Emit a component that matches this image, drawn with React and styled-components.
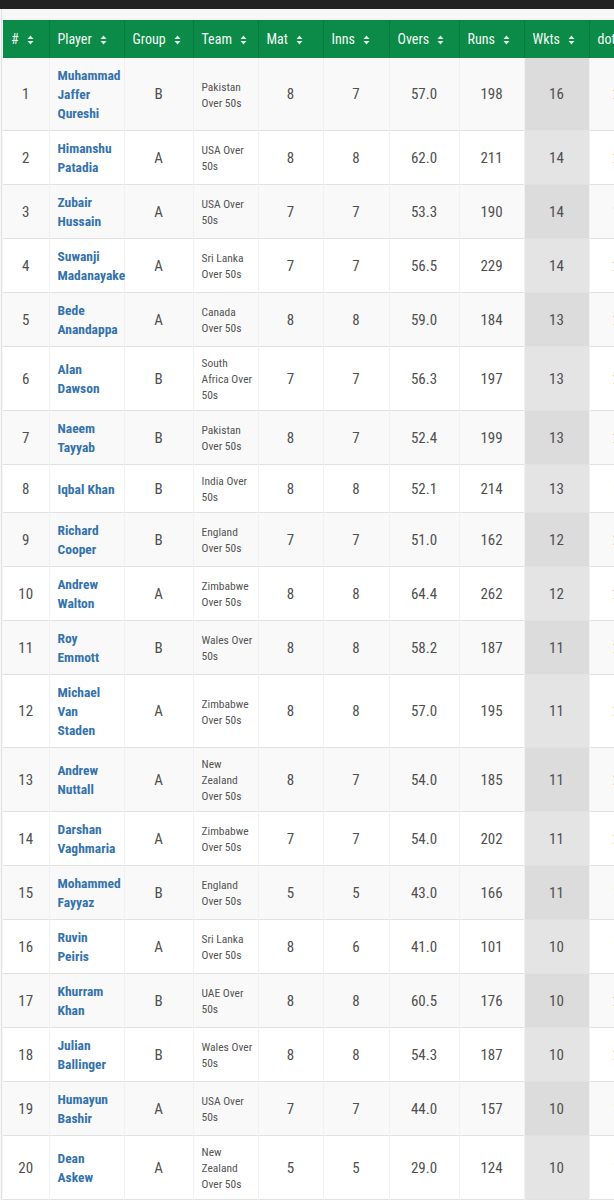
import React from "react";
import styled, { createGlobalStyle } from "styled-components";

const GlobalStyle = createGlobalStyle`
  html, body {
    margin: 0;
    padding: 0;
    background: #f7f7f7;
    font-family: "Roboto Condensed", Roboto, "Liberation Sans", sans-serif;
  }
`;

const players = [
  [1, "Muhammad Jaffer Qureshi", "B", "Pakistan Over 50s", 8, 7, "57.0", 198, 16, 212],
  [2, "Himanshu Patadia", "A", "USA Over 50s", 8, 8, "62.0", 211, 14, 205],
  [3, "Zubair Hussain", "A", "USA Over 50s", 7, 7, "53.3", 190, 14, 178],
  [4, "Suwanji Madanayake", "A", "Sri Lanka Over 50s", 7, 7, "56.5", 229, 14, 201],
  [5, "Bede Anandappa", "A", "Canada Over 50s", 8, 8, "59.0", 184, 13, 220],
  [6, "Alan Dawson", "B", "South Africa Over 50s", 7, 7, "56.3", 197, 13, 208],
  [7, "Naeem Tayyab", "B", "Pakistan Over 50s", 8, 7, "52.4", 199, 13, 203],
  [8, "Iqbal Khan", "B", "India Over 50s", 8, 8, "52.1", 214, 13, 187],
  [9, "Richard Cooper", "B", "England Over 50s", 7, 7, "51.0", 162, 12, 206],
  [10, "Andrew Walton", "A", "Zimbabwe Over 50s", 8, 8, "64.4", 262, 12, 224],
  [11, "Roy Emmott", "B", "Wales Over 50s", 8, 8, "58.2", 187, 11, 231],
  [12, "Michael Van Staden", "A", "Zimbabwe Over 50s", 8, 8, "57.0", 195, 11, 209],
  [13, "Andrew Nuttall", "A", "New Zealand Over 50s", 8, 7, "54.0", 185, 11, 215],
  [14, "Darshan Vaghmaria", "A", "Zimbabwe Over 50s", 7, 7, "54.0", 202, 11, 200],
  [15, "Mohammed Fayyaz", "B", "England Over 50s", 5, 5, "43.0", 166, 11, 164],
  [16, "Ruvin Peiris", "A", "Sri Lanka Over 50s", 8, 6, "41.0", 101, 10, 152],
  [17, "Khurram Khan", "B", "UAE Over 50s", 8, 8, "60.5", 176, 10, 233],
  [18, "Julian Ballinger", "B", "Wales Over 50s", 8, 8, "54.3", 187, 10, 202],
  [19, "Humayun Bashir", "A", "USA Over 50s", 7, 7, "44.0", 157, 10, 171],
  [20, "Dean Askew", "A", "New Zealand Over 50s", 5, 5, "29.0", 124, 10, 118],
  [21, "Shahid Anwar", "B", "UAE Over 50s", 6, 6, "40.0", 170, 9, 160],
];

const columns = [
  { label: "#", width: 46 },
  { label: "Player", width: 75 },
  { label: "Group", width: 69 },
  { label: "Team", width: 65 },
  { label: "Mat", width: 65 },
  { label: "Inns", width: 66 },
  { label: "Overs", width: 70 },
  { label: "Runs", width: 65 },
  { label: "Wkts", width: 65 },
  { label: "dots", width: 70 },
];

const TopBar = styled.div`
  height: 9px;
  background: #222;
`;

const Page = styled.div`
  padding: 11px 0 0 1px;
  overflow: hidden;
  border-left: 1px solid #e2e2e2;
  margin-left: 1px;
`;

const Table = styled.table`
  border-collapse: collapse;
  table-layout: fixed;
  width: 656px;
  background: #fff;
`;

const HeadCell = styled.th`
  height: 38px;
  padding: 0 0 0 8px;
  background: #0b8a48;
  color: #f4faf6;
  font-size: 14px;
  font-weight: 400;
  text-align: left;
  white-space: nowrap;
  border-right: 1px solid #087a3e;
  box-sizing: border-box;
`;

const SortIcon = styled.svg`
  width: 7px;
  height: 10px;
  margin-left: 8px;
  vertical-align: -1px;
`;

const Row = styled.tr`
  background: ${(p) => (p.$odd ? "#f9f9f9" : "#fff")};
  border-bottom: 1px solid #e1e1e1;
`;

const Cell = styled.td`
  padding: 8px 8px 7px;
  vertical-align: middle;
  text-align: ${(p) => p.$align || "center"};
  font-size: 15px;
  line-height: 19px;
  color: #505050;
  border-right: 1px solid #f1f1f1;
  background: ${(p) => (p.$sorted ? (p.$odd ? "#dcdcdc" : "#e4e4e4") : "transparent")};
`;

const PlayerLink = styled.a`
  color: #3573ad;
  font-size: 13.5px;
  font-weight: 700;
  text-decoration: none;
`;

const TeamText = styled.span`
  display: block;
  margin-right: -5px;
  font-size: 11.5px;
  line-height: 16px;
  color: #555;
`;

function Sort() {
  return (
    <SortIcon viewBox="0 0 7 10">
      <path d="M3.5 0.5 L6.5 4 L0.5 4 Z M0.5 6 L6.5 6 L3.5 9.5 Z" fill="rgba(255,255,255,0.85)" />
    </SortIcon>
  );
}

export default function App() {
  return (
    <>
      <GlobalStyle />
      <TopBar />
      <Page>
        <Table>
          <colgroup>
            {columns.map((c) => (
              <col key={c.label} style={{ width: c.width }} />
            ))}
          </colgroup>
          <thead>
            <tr>
              {columns.map((c) => (
                <HeadCell key={c.label}>
                  {c.label}
                  <Sort />
                </HeadCell>
              ))}
            </tr>
          </thead>
          <tbody>
            {players.map((r, i) => {
              const odd = i % 2 === 0;
              return (
                <Row key={r[0]} $odd={odd}>
                  <Cell>{r[0]}</Cell>
                  <Cell $align="left">
                    <PlayerLink href="#">{r[1]}</PlayerLink>
                  </Cell>
                  <Cell>{r[2]}</Cell>
                  <Cell $align="left">
                    <TeamText>{r[3]}</TeamText>
                  </Cell>
                  <Cell>{r[4]}</Cell>
                  <Cell>{r[5]}</Cell>
                  <Cell>{r[6]}</Cell>
                  <Cell>{r[7]}</Cell>
                  <Cell $sorted $odd={odd}>{r[8]}</Cell>
                  <Cell>{r[9]}</Cell>
                </Row>
              );
            })}
          </tbody>
        </Table>
      </Page>
    </>
  );
}
